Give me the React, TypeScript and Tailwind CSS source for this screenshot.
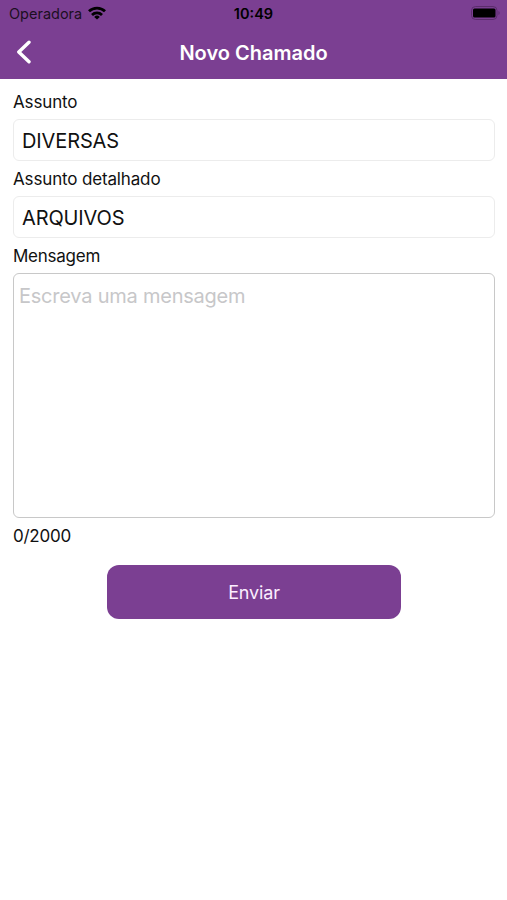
function StatusBar() {
  return (
    <div className="flex h-7 items-center justify-between pl-[9px] pr-[7px] text-[14.5px] text-[#1c0f22]">
      <div className="flex w-40 items-center gap-1.5">
        <span>Operadora</span>
        <svg className="-mt-0.5" width="18" height="14" viewBox="0 0 18 14" fill="none" stroke="#000" strokeWidth="2.8">
          <path d="M1 5.300a11.500 11.500 0 0 1 16 0" />
          <path d="M4 8.900a7.200 7.200 0 0 1 10 0" />
          <path d="M9 13.500 6.200 10.900a4 4 0 0 1 5.600 0Z" fill="#000" stroke="none" />
        </svg>
      </div>
      <span className="-ml-0.5 font-semibold text-black">10:49</span>
      <div className="flex w-40 justify-end">
        <svg className="-mt-0.5" width="29" height="14" viewBox="0 0 29 14">
          <rect x="0.5" y="0.5" width="25.500" height="13" rx="4" fill="none" stroke="#5b2d6c" />
          <rect x="2" y="2.500" width="22.500" height="9" rx="1.500" fill="#000" />
          <path d="M27.500 5c1.500.5 1.500 3.500 0 4Z" fill="#5b2d6c" />
        </svg>
      </div>
    </div>
  );
}

function Field({ label, value }: { label: string; value: string }) {
  return (
    <div>
      <div className="flex h-[35px] items-center pt-0.5 text-[17px] tracking-[-0.15px]">{label}</div>
      <div className="flex h-[42px] items-center rounded-md border border-[#ececec] px-2 pt-0.5 text-[20px] tracking-[-0.12px]">{value}</div>
    </div>
  );
}

export default function App() {
  return (
    <div className="flex h-[900px] w-[507px] flex-col overflow-hidden bg-white font-['Inter',sans-serif] text-[#111]">
      <header className="h-[79px] bg-[#7b3f92]">
        <StatusBar />
        <div className="grid h-12 grid-cols-[1fr_auto_1fr] items-center px-4">
          <svg width="16" height="24" viewBox="0 0 16 24" fill="none" stroke="#fff" strokeWidth="3.4" strokeLinecap="round" strokeLinejoin="round">
            <path d="M13 2.200 2.800 12 13 21.800" />
          </svg>
          <h1 className="pt-px text-[20px] font-semibold text-white">Novo Chamado</h1>
        </div>
      </header>
      <main className="flex flex-col pl-[13px] pr-3 pt-[5px]">
        <Field label="Assunto" value="DIVERSAS" />
        <Field label="Assunto detalhado" value="ARQUIVOS" />
        <div className="flex h-[35px] items-center pt-0.5 text-[17px] tracking-[-0.25px]">Mensagem</div>
        <textarea
          className="h-[245px] w-full resize-none rounded-md border-[1.5px] border-[#c8c8c8] px-[5px] py-[7px] text-[20px] tracking-[-0.23px] placeholder:text-[#c7c7c9]"
          placeholder="Escreva uma mensagem"
        />
        <div className="flex h-9 items-center pt-px text-[17px] tracking-[-0.25px]">0/2000</div>
        <button className="mt-[11px] h-[54px] w-[294px] self-center rounded-xl bg-[#7b3f92] text-[18px] tracking-[-0.15px] text-[#fbeeff]">Enviar</button>
      </main>
    </div>
  );
}
